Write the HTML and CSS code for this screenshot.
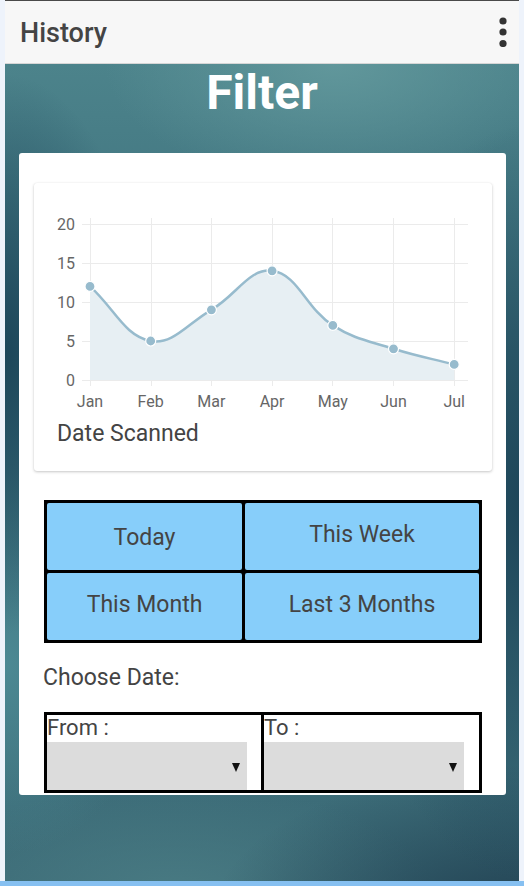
FILE: index.html
```html
<!DOCTYPE html>
<html>
<head>
<meta charset="utf-8">
<link rel="stylesheet" href="styles.css">
</head>
<body>
<div class="screen">
  <header class="appbar">
    <span class="appbar-title">History</span>
    <svg class="kebab" width="8" height="30" viewBox="0 0 8 30">
      <circle cx="4" cy="4" r="3.6" fill="#333"/>
      <circle cx="4" cy="15" r="3.6" fill="#333"/>
      <circle cx="4" cy="26.5" r="3.6" fill="#333"/>
    </svg>
  </header>
  <main class="stage">
    <h1 class="heading">Filter</h1>
    <section class="card">
      <div class="chart-card">
        <svg class="chart" width="458" height="235" viewBox="0 0 458 235">
          <g stroke="#ebebeb" stroke-width="1">
            <line x1="48" y1="41.5" x2="434" y2="41.5"/>
            <line x1="48" y1="80.5" x2="434" y2="80.5"/>
            <line x1="48" y1="119.5" x2="434" y2="119.5"/>
            <line x1="48" y1="158.5" x2="434" y2="158.5"/>
            <line x1="48" y1="197.5" x2="434" y2="197.5"/>
            <line x1="56.5" y1="35" x2="56.5" y2="203"/>
            <line x1="117.5" y1="35" x2="117.5" y2="203"/>
            <line x1="177.5" y1="35" x2="177.5" y2="203"/>
            <line x1="238.5" y1="35" x2="238.5" y2="203"/>
            <line x1="298.5" y1="35" x2="298.5" y2="203"/>
            <line x1="359.5" y1="35" x2="359.5" y2="203"/>
            <line x1="420.5" y1="35" x2="420.5" y2="203"/>
          </g>
          <g class="axis-text" text-anchor="end">
            <text x="41" y="47">20</text>
            <text x="41" y="86">15</text>
            <text x="41" y="125">10</text>
            <text x="41" y="164">5</text>
            <text x="41" y="203">0</text>
          </g>
          <g class="axis-text" text-anchor="middle">
            <text x="56" y="224">Jan</text>
            <text x="116.7" y="224">Feb</text>
            <text x="177.4" y="224">Mar</text>
            <text x="238.1" y="224">Apr</text>
            <text x="298.8" y="224">May</text>
            <text x="359.5" y="224">Jun</text>
            <text x="420.2" y="224">Jul</text>
          </g>
          <path fill="#e7eff3" d="M56,103.4 C80.3,125.2 90.2,152.9 116.7,158 C138.8,162.3 153.8,140.4 177.4,126.8 C202.4,112.3 215.3,84.9 238.1,87.8 C263.8,91.1 271.7,125 298.8,142.4 C320.3,156.2 334.7,157.8 359.5,165.8 C383.3,173.4 395.9,175.2 420.2,181.4 L420.2,197 L56,197 Z"/>
          <path fill="none" stroke="#97bbcd" stroke-width="2.5" d="M56,103.4 C80.3,125.2 90.2,152.9 116.7,158 C138.8,162.3 153.8,140.4 177.4,126.8 C202.4,112.3 215.3,84.9 238.1,87.8 C263.8,91.1 271.7,125 298.8,142.4 C320.3,156.2 334.7,157.8 359.5,165.8 C383.3,173.4 395.9,175.2 420.2,181.4"/>
          <g fill="#97bbcd" stroke="#fff" stroke-width="1.2">
            <circle cx="56" cy="103.4" r="5"/>
            <circle cx="116.7" cy="158" r="5"/>
            <circle cx="177.4" cy="126.8" r="5"/>
            <circle cx="238.1" cy="87.8" r="5"/>
            <circle cx="298.8" cy="142.4" r="5"/>
            <circle cx="359.5" cy="165.8" r="5"/>
            <circle cx="420.2" cy="181.4" r="5"/>
          </g>
        </svg>
        <div class="chart-label">Date Scanned</div>
      </div>

      <div class="range-grid">
        <div class="range range-today">Today</div>
        <div class="range">This Week</div>
        <div class="range">This Month</div>
        <div class="range">Last 3 Months</div>
      </div>

      <div class="choose">Choose Date:</div>

      <div class="dates">
        <div class="date-cell">
          <div class="date-label">From :</div>
          <div class="select"><span class="arrow"></span></div>
        </div>
        <div class="date-cell">
          <div class="date-label">To :</div>
          <div class="select"><span class="arrow"></span></div>
        </div>
      </div>
    </section>
  </main>
</div>
<div class="bottom-strip"></div>
</body>
</html>
```

FILE: styles.css
```css
html, body {
  margin: 0;
  padding: 0;
}

body {
  background: #eef3fb;
  font-family: Roboto, "Noto Sans", "Liberation Sans", sans-serif;
  width: 524px;
  height: 886px;
  overflow: hidden;
}

.screen {
  margin-left: 5px;
  width: 514px;
  height: 881px;
  border-top: 1px solid #4a4a4a;
  box-sizing: border-box;
  display: flex;
  flex-direction: column;
}

.appbar {
  height: 62px;
  flex: 0 0 62px;
  background: #f7f7f7;
  border-bottom: 1px solid #d6d6d6;
  display: flex;
  align-items: center;
  justify-content: space-between;
  padding: 0 12px 0 15px;
}

.appbar-title {
  font-size: 27px;
  font-weight: 500;
  color: #444;
  margin-top: 1px;
}

.kebab {
  display: block;
}

.stage {
  flex: 1 1 auto;
  display: flex;
  flex-direction: column;
  background:
    radial-gradient(ellipse 230px 120px at 330px 0px, rgba(98,152,156,0.95), rgba(98,152,156,0)),
    radial-gradient(ellipse 140px 280px at 0px 290px, rgba(27,68,88,0.95), rgba(27,68,88,0)),
    radial-gradient(ellipse 150px 190px at 0px 600px, rgba(78,140,150,0.9), rgba(78,140,150,0)),
    radial-gradient(ellipse 190px 380px at 524px 440px, rgba(27,66,86,0.95), rgba(27,66,86,0)),
    radial-gradient(ellipse 320px 160px at 524px 860px, rgba(30,60,78,0.95), rgba(30,60,78,0)),
    radial-gradient(ellipse 260px 110px at 170px 830px, rgba(74,124,132,0.9), rgba(74,124,132,0)),
    linear-gradient(180deg, #4c838b 0%, #3b6d7a 35%, #3d6f7b 70%, #3c6b77 100%);
}

.heading {
  margin: 1px 0 32px;
  font-size: 48px;
  line-height: 56px;
  font-weight: 700;
  color: #fff;
  text-align: center;
}

.card {
  margin: 0 13px 0 14px;
  background: #fff;
  border-radius: 3px;
  padding: 30px 14px 2px 15px;
  height: 642px;
  box-sizing: border-box;
  display: flex;
  flex-direction: column;
}

.chart-card {
  width: 458px;
  height: 288px;
  box-sizing: border-box;
  border-radius: 3px;
  background: #fff;
  box-shadow: 0 1px 3px rgba(0,0,0,0.22), 0 0 1px rgba(0,0,0,0.08);
}

.chart {
  display: block;
}

.axis-text {
  font-family: Roboto, "Noto Sans", sans-serif;
  font-size: 16px;
  fill: #666;
}

.chart-label {
  margin: 4px 0 0 23px;
  font-size: 23px;
  line-height: 24px;
  color: #444;
}

.range-grid {
  margin: 29px 0 0 10px;
  width: 438px;
  height: 143px;
  box-sizing: border-box;
  border: 3px solid #000;
  background: #000;
  display: grid;
  grid-template-columns: 195px 1fr;
  grid-template-rows: 67px 67px;
  gap: 3px;
}

.range {
  background: #87cefa;
  border-radius: 2px;
  display: flex;
  align-items: center;
  justify-content: center;
  font-size: 23px;
  color: #444;
  padding-bottom: 4px;
  box-sizing: border-box;
}

.range-today {
  padding-bottom: 0;
  padding-top: 2px;
}

.choose {
  margin: 22px 0 0 9px;
  font-size: 23px;
  line-height: 26px;
  color: #444;
}

.dates {
  margin: 21px 0 0 10px;
  width: 438px;
  height: 81px;
  box-sizing: border-box;
  border: 3px solid #000;
  background: #000;
  display: grid;
  grid-template-columns: 214px 1fr;
  gap: 3px;
}

.date-cell {
  background: #fff;
  display: flex;
  flex-direction: column;
}

.date-label {
  font-size: 22px;
  line-height: 25px;
  color: #444;
  height: 27px;
}

.select {
  width: 200px;
  height: 48px;
  background: #dcdcdc;
  display: flex;
  align-items: center;
  justify-content: flex-end;
  padding-right: 7px;
  box-sizing: border-box;
}

.arrow {
  width: 0;
  height: 0;
  border-left: 4.5px solid transparent;
  border-right: 4.5px solid transparent;
  border-top: 9px solid #111;
  margin-top: 2px;
}

.bottom-strip {
  height: 5px;
  background: #86c0f1;
}
```
